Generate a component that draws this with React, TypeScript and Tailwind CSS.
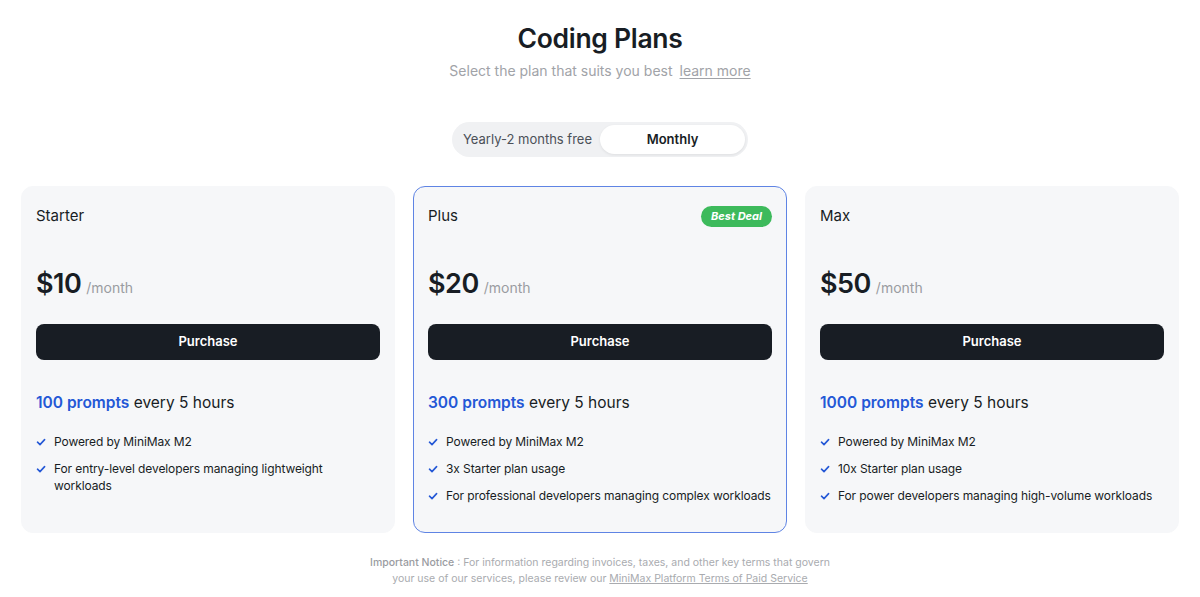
import React from "react";

const plans = [
  {
    name: "Starter",
    price: "$10",
    prompts: "100 prompts",
    features: ["Powered by MiniMax M2", "For entry-level developers managing lightweight workloads"],
    best: false,
  },
  {
    name: "Plus",
    price: "$20",
    prompts: "300 prompts",
    features: ["Powered by MiniMax M2", "3x Starter plan usage", "For professional developers managing complex workloads"],
    best: true,
  },
  {
    name: "Max",
    price: "$50",
    prompts: "1000 prompts",
    features: ["Powered by MiniMax M2", "10x Starter plan usage", "For power developers managing high-volume workloads"],
    best: false,
  },
];

function Check() {
  return (
    <svg width="10" height="10" viewBox="0 0 10 10" className="mt-[4px] shrink-0">
      <path d="M1.5 5.2 L4 7.6 L8.6 2.6" fill="none" stroke="#2458d6" strokeWidth="1.6" strokeLinecap="round" strokeLinejoin="round" />
    </svg>
  );
}

export default function App() {
  return (
    <div
      className="w-full min-h-[597px] bg-white flex flex-col items-center text-[#181d24]"
      style={{ fontFamily: "Inter, 'Noto Sans', sans-serif" }}
    >
      <h1 className="mt-[20px] text-[26.5px] leading-[36px] font-semibold tracking-[-0.3px]">Coding Plans</h1>
      <p className="mt-[5px] text-[14px] leading-[20px] text-[#a1a3a8]">
        Select the plan that suits you best
        <span className="ml-[7px] underline underline-offset-2">learn more</span>
      </p>

      <div className="mt-[41px] flex rounded-full bg-[#f0f1f3] p-[3px] h-[35px]">
        <div className="w-[145px] flex items-center justify-center text-[13px] text-[#4b5058]">Yearly-2 months free</div>
        <div className="w-[145px] flex items-center justify-center rounded-full bg-white text-[13px] font-semibold shadow-[0_1px_3px_rgba(0,0,0,0.08)]">
          Monthly
        </div>
      </div>

      <div className="mt-[29px] w-full px-[21px] grid grid-cols-3 gap-[18px]">
        {plans.map((p) => (
          <div
            key={p.name}
            className={
              "rounded-[12px] bg-[#f6f7f9] px-[14px] pt-[18px] pb-[28px] border " +
              (p.best ? "border-[#5f84e4]" : "border-[#f6f7f9]")
            }
          >
            <div className="flex items-center justify-between h-[22px]">
              <div className="text-[15px] leading-[22px]">{p.name}</div>
              {p.best && (
                <div className="h-[21px] px-[10px] rounded-full bg-[#3dba5c] text-white text-[11px] font-bold italic flex items-center">
                  Best Deal
                </div>
              )}
            </div>
            <div className="mt-[39px] flex items-baseline">
              <span className="text-[27px] leading-[36px] font-semibold tracking-[-0.5px]">{p.price}</span>
              <span className="ml-[5px] text-[14px] text-[#9a9ca1]">/month</span>
            </div>
            <button className="mt-[22px] w-full h-[36px] rounded-[8px] bg-[#181d24] text-white text-[13px] font-semibold">
              Purchase
            </button>
            <div className="mt-[31px] text-[15.5px] leading-[24px]">
              <span className="text-[#2458d6] font-semibold">{p.prompts}</span> every 5 hours
            </div>
            <div className="mt-[18px] flex flex-col gap-[10px]">
              {p.features.map((f) => (
                <div key={f} className="flex gap-[8px] text-[12px] leading-[17px] tracking-[-0.1px]">
                  <Check />
                  <span className={p.name === "Starter" ? "max-w-[290px]" : ""}>{f}</span>
                </div>
              ))}
            </div>
          </div>
        ))}
      </div>

      <div className="mt-[22px] flex flex-col items-center text-[10.5px] leading-[16px] text-[#a9abaf]">
        <div>
          <span className="text-[#9a9ca1] font-medium">Important Notice</span> : For information regarding invoices, taxes, and other key terms that govern
        </div>
        <div>
          your use of our services, please review our <span className="underline">MiniMax Platform Terms of Paid Service</span>
        </div>
      </div>
    </div>
  );
}
